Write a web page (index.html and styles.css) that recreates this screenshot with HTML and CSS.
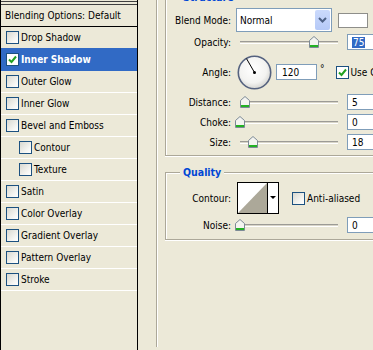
FILE: index.html
```html
<!DOCTYPE html>
<html lang="en">
<head>
  <meta charset="UTF-8">
  <title>Layer Style - Inner Shadow</title>
  <link rel="stylesheet" href="styles.css">
</head>
<body>
  <div class="dialog">
    <!-- Styles list -->
    <div class="styles-list">
      <div class="list-top"></div>
      <div class="list-head">Blending Options: Default</div>
      <div class="item"><span class="check"></span>Drop Shadow</div>
      <div class="item selected">
        <span class="check on"><svg width="11" height="11" viewBox="0 0 11 11"><path d="M2 5.5 L4.5 8 L9 2.5" fill="none" stroke="#21a121" stroke-width="2"/></svg></span>Inner Shadow
      </div>
      <div class="item"><span class="check"></span>Outer Glow</div>
      <div class="item"><span class="check"></span>Inner Glow</div>
      <div class="item"><span class="check"></span>Bevel and Emboss</div>
      <div class="item sub"><span class="check"></span>Contour</div>
      <div class="item sub"><span class="check"></span>Texture</div>
      <div class="item"><span class="check"></span>Satin</div>
      <div class="item"><span class="check"></span>Color Overlay</div>
      <div class="item"><span class="check"></span>Gradient Overlay</div>
      <div class="item"><span class="check"></span>Pattern Overlay</div>
      <div class="item"><span class="check"></span>Stroke</div>
    </div>

    <!-- Settings panel -->
    <div class="panel">
      <div class="effect">
        <div class="group structure">
          <span class="legend">Structure</span>

          <div class="row row-blend">
            <span class="lbl">Blend Mode:</span>
            <div class="select">
              <span>Normal</span>
              <span class="select-btn"><svg width="9" height="6" viewBox="0 0 9 6"><path d="M1 1 L4.5 4.5 L8 1" fill="none" stroke="#4d6185" stroke-width="2"/></svg></span>
            </div>
            <div class="swatch"></div>
          </div>

          <div class="row">
            <span class="lbl">Opacity:</span>
            <div class="slider">
              <div class="track"></div>
              <svg class="thumb" style="left: 69px" width="10" height="12" viewBox="0 0 10 12"><path d="M0.5 4.5 L5 0.5 L9.5 4.5 V11.5 H0.5 Z" fill="#f4f4f0" stroke="#7d8a96"/><rect x="1" y="9" width="8" height="2" fill="#23b123"/></svg>
            </div>
            <div class="field"><span class="hl">75</span></div>
          </div>

          <div class="row row-angle">
            <span class="lbl">Angle:</span>
            <svg class="dial" width="35" height="35" viewBox="0 0 35 35">
              <defs>
                <radialGradient id="dialFill" cx="0.45" cy="0.4" r="0.6">
                  <stop offset="0" stop-color="#ffffff"/>
                  <stop offset="0.7" stop-color="#f3f3f1"/>
                  <stop offset="1" stop-color="#d6d6d2"/>
                </radialGradient>
              </defs>
              <circle cx="17.5" cy="17.5" r="16.2" fill="url(#dialFill)" stroke="#55627f" stroke-width="1.6"/>
              <line x1="17.5" y1="17.5" x2="9.5" y2="3.6" stroke="#000" stroke-width="1"/>
              <circle cx="17.5" cy="17.5" r="1.5" fill="#000"/>
            </svg>
            <div class="field field-angle">120</div>
            <span class="deg">°</span>
            <span class="check on"><svg width="11" height="11" viewBox="0 0 11 11"><path d="M2 5.5 L4.5 8 L9 2.5" fill="none" stroke="#21a121" stroke-width="2"/></svg></span>
            <span>Use Global Light</span>
          </div>

          <div class="row">
            <span class="lbl">Distance:</span>
            <div class="slider">
              <div class="track"></div>
              <svg class="thumb" style="left: 0px" width="10" height="12" viewBox="0 0 10 12"><path d="M0.5 4.5 L5 0.5 L9.5 4.5 V11.5 H0.5 Z" fill="#f4f4f0" stroke="#7d8a96"/><rect x="1" y="9" width="8" height="2" fill="#23b123"/></svg>
            </div>
            <div class="field">5</div>
          </div>

          <div class="row">
            <span class="lbl">Choke:</span>
            <div class="slider">
              <div class="track"></div>
              <svg class="thumb" style="left: -5px" width="10" height="12" viewBox="0 0 10 12"><path d="M0.5 4.5 L5 0.5 L9.5 4.5 V11.5 H0.5 Z" fill="#f4f4f0" stroke="#7d8a96"/><rect x="1" y="9" width="8" height="2" fill="#23b123"/></svg>
            </div>
            <div class="field">0</div>
          </div>

          <div class="row">
            <span class="lbl">Size:</span>
            <div class="slider">
              <div class="track"></div>
              <svg class="thumb" style="left: 8px" width="10" height="12" viewBox="0 0 10 12"><path d="M0.5 4.5 L5 0.5 L9.5 4.5 V11.5 H0.5 Z" fill="#f4f4f0" stroke="#7d8a96"/><rect x="1" y="9" width="8" height="2" fill="#23b123"/></svg>
            </div>
            <div class="field">18</div>
          </div>
        </div>

        <div class="group quality">
          <span class="legend">Quality</span>

          <div class="row row-contour">
            <span class="lbl">Contour:</span>
            <svg class="contour" width="42" height="32" viewBox="0 0 42 32">
              <rect x="0.5" y="0.5" width="41" height="31" fill="#fff" stroke="#000"/>
              <path d="M1 31 L30 1 V31 Z" fill="#aca899"/>
              <line x1="30.5" y1="1" x2="30.5" y2="31" stroke="#000"/>
              <path d="M33 14 H39 L36 17 Z" fill="#000"/>
            </svg>
            <span class="check aa"></span>
            <span>Anti-aliased</span>
          </div>

          <div class="row">
            <span class="lbl">Noise:</span>
            <div class="slider">
              <div class="track"></div>
              <svg class="thumb" style="left: -5px" width="10" height="12" viewBox="0 0 10 12"><path d="M0.5 4.5 L5 0.5 L9.5 4.5 V11.5 H0.5 Z" fill="#f4f4f0" stroke="#7d8a96"/><rect x="1" y="9" width="8" height="2" fill="#23b123"/></svg>
            </div>
            <div class="field">0</div>
          </div>
        </div>
      </div>
    </div>
  </div>
</body>
</html>
```

FILE: styles.css
```css
body {
  margin: 0;
  background-color: #ece9d8;
  font-family: "DejaVu Sans Condensed", "Liberation Sans", sans-serif;
  font-size: 10px;
  color: #000;
  overflow: hidden;
}

.dialog {
  display: flex;
  width: 373px;
  height: 350px;
}

/* Left list of effects */
.styles-list {
  flex: none;
  width: 136px;
  overflow: hidden;
  border-left: 1px solid #000;
  border-right: 1px solid #000;
}

.list-top {
  margin-top: 1px;
  height: 2px;
  border-top: 1px solid #404040;
  border-bottom: 1px solid #404040;
}

.list-head {
  height: 21px;
  line-height: 21px;
  padding-left: 4px;
  border-bottom: 1px solid #000;
  white-space: nowrap;
}

.item {
  display: flex;
  align-items: center;
  height: 21px;
  padding-left: 5px;
  border-bottom: 1px solid #fff;
  white-space: nowrap;
}

.item.sub {
  padding-left: 18px;
}

.item.selected {
  margin-top: -1px;
  border-top: 1px solid #316ac5;
  border-bottom-color: #316ac5;
  background-color: #316ac5;
  color: #fff;
  font-weight: bold;
}

.check {
  flex: none;
  width: 11px;
  height: 11px;
  margin-right: 2px;
  border: 1px solid #1c5180;
  background: linear-gradient(135deg, #d8d8d0, #f6f6f3 70%, #fff);
}

.check.on {
  background: #fff;
}

.check svg {
  display: block;
}

/* Right side */
.panel {
  flex: 1;
  overflow: hidden;
  padding-left: 18px;
}

.effect {
  height: 350px;
  padding-left: 8px;
  border-left: 1px solid #aca899;
  box-shadow: inset 1px 0 #fff;
}

.group {
  position: relative;
  width: 240px;
  padding-left: 1px;
  border: 1px solid #aca899;
  box-shadow: inset 1px 1px #fff, 0 1px #fff;
}

.legend {
  position: absolute;
  top: -7px;
  left: 14px;
  padding: 0 3px;
  line-height: 12px;
  background-color: #ece9d8;
  color: #0046d5;
  font-weight: bold;
  font-size: 10.5px;
}

.structure {
  margin-top: -3px;
  padding-top: 8px;
  padding-bottom: 5px;
}

.quality {
  margin-top: 16px;
  padding-top: 9px;
  padding-bottom: 6px;
}

.row {
  display: flex;
  align-items: center;
  height: 16px;
  margin-top: 4px;
  white-space: nowrap;
}

.row-blend {
  height: 28px;
  margin-top: 0;
}

.row-blend + .row {
  margin-top: 0;
}

.row-angle {
  height: 36px;
}

.row-contour {
  height: 32px;
  margin-top: 0;
}

.row-contour + .row {
  margin-top: 3px;
}

.lbl {
  flex: none;
  width: 64px;
  text-align: right;
}

.select {
  flex: none;
  display: flex;
  align-items: center;
  box-sizing: border-box;
  width: 96px;
  height: 24px;
  margin-left: 5px;
  padding-left: 3px;
  border: 1px solid #7f9db9;
  background-color: #fff;
}

.select-btn {
  display: flex;
  align-items: center;
  justify-content: center;
  width: 15px;
  height: 20px;
  margin-left: auto;
  margin-right: 1px;
  border-radius: 2px;
  background: linear-gradient(#cbdafc, #b5c9f7);
}

.swatch {
  flex: none;
  width: 28px;
  height: 13px;
  margin-left: 6px;
  border: 1px solid #8e8e8a;
  background-color: #fff;
}

.slider {
  position: relative;
  flex: none;
  display: flex;
  align-items: center;
  width: 98px;
  height: 12px;
  margin-left: 9px;
}

.track {
  flex: 1;
  height: 1px;
  border-top: 1px solid #9c9b96;
  border-bottom: 1px solid #fff;
  background-color: #d8d5c8;
}

.thumb {
  position: absolute;
  top: 0;
}

.field {
  flex: none;
  display: flex;
  align-items: center;
  width: 40px;
  height: 14px;
  margin-left: 9px;
  padding-left: 4px;
  border: 1px solid #7f9db9;
  background-color: #fff;
}

.hl {
  padding: 0 1px;
  line-height: 11px;
  background-color: #316ac5;
  color: #fff;
}

.dial {
  flex: none;
  margin-left: 6px;
}

.field-angle {
  width: 34px;
  margin-left: 4px;
  padding-left: 5px;
}

.deg {
  width: 5px;
  margin-left: 3px;
  margin-bottom: 8px;
}

.row-angle .check {
  margin-left: 11px;
}

.contour {
  flex: none;
  margin-left: 6px;
}

.check.aa {
  margin-left: 13px;
}
```
